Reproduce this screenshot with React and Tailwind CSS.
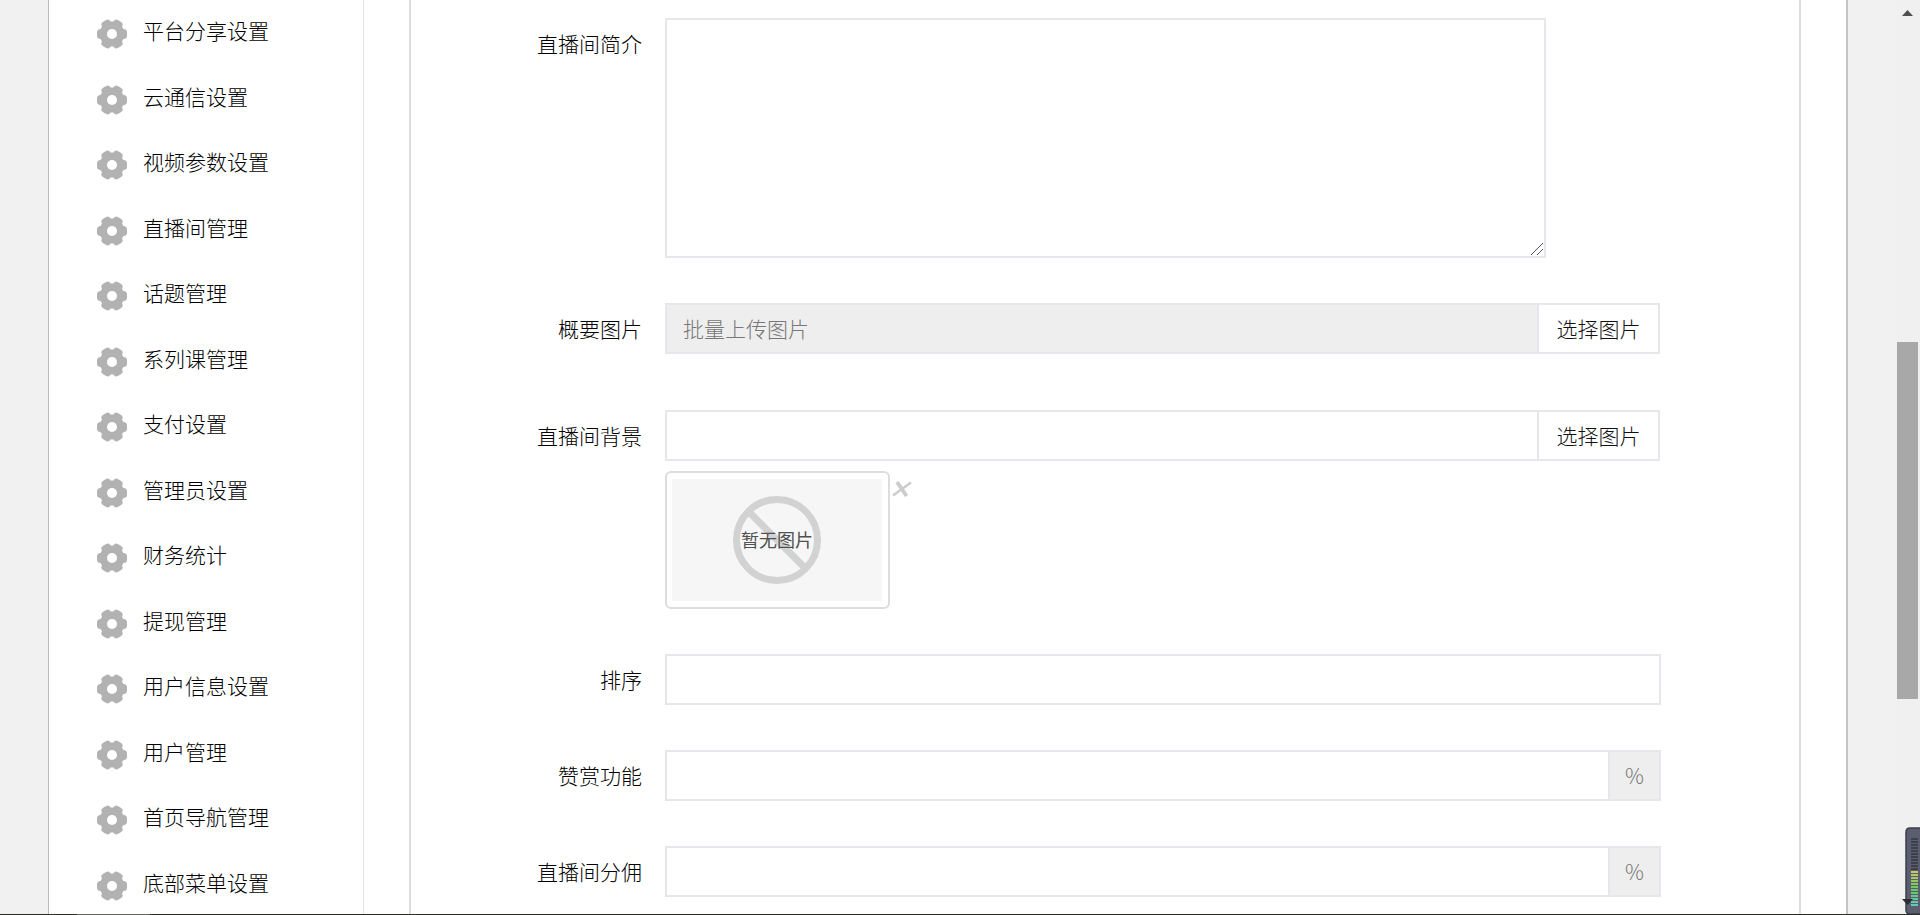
import React from "react";

const MENU_ITEMS = [
  "平台分享设置",
  "云通信设置",
  "视频参数设置",
  "直播间管理",
  "话题管理",
  "系列课管理",
  "支付设置",
  "管理员设置",
  "财务统计",
  "提现管理",
  "用户信息设置",
  "用户管理",
  "首页导航管理",
  "底部菜单设置",
];

function GearIcon() {
  return (
    <svg
      className="w-[30px] h-[30px] shrink-0"
      viewBox="-15 -15 30 30"
      aria-hidden="true"
    >
      <g fill="#b2b2b2">
        <circle r="12.4" />
        {[0, 60, 120].map((angle) => (
          <rect
            key={angle}
            x="-15"
            y="-5"
            width="30"
            height="10"
            rx="3.5"
            transform={`rotate(${angle})`}
          />
        ))}
      </g>
      <circle r="5" fill="#fff" />
    </svg>
  );
}

function Sidebar() {
  return (
    <nav className="w-[315px] shrink-0 border-r border-[#e4e4e4]">
      <ul>
        {MENU_ITEMS.map((item) => (
          <li key={item} className="odd:h-[66px] even:h-[65px]">
            <a
              href="#"
              className="flex items-center gap-4 h-[61px] pl-12 text-[21px] text-black"
            >
              <span className="pt-[7px]">
                <GearIcon />
              </span>
              <span>{item}</span>
            </a>
          </li>
        ))}
      </ul>
    </nav>
  );
}

function FormRow({ id, label, children }) {
  return (
    <div className="flex">
      <label
        htmlFor={id}
        className="w-[231px] mr-[23px] shrink-0 text-right text-[21px] leading-[51px] text-black"
      >
        {label}
      </label>
      <div className="flex-1 min-w-0">{children}</div>
    </div>
  );
}

function ImageField({ id, ...inputProps }) {
  return (
    <div className="flex h-[51px] mr-px">
      <input
        id={id}
        type="text"
        className="flex-1 min-w-0 border-2 border-r-0 border-[#e7e7eb] px-4 text-[21px] outline-none placeholder:text-[#777] read-only:bg-[#eee]"
        {...inputProps}
      />
      <button
        type="button"
        className="w-[123px] shrink-0 border-2 border-[#e7e7eb] bg-white text-[21px] text-[#111]"
      >
        选择图片
      </button>
    </div>
  );
}

function PercentField({ id }) {
  return (
    <div className="flex h-[51px]">
      <input
        id={id}
        type="text"
        className="flex-1 min-w-0 border-2 border-r-0 border-[#e7e7eb] px-4 text-[21px] outline-none"
      />
      <span className="w-[53px] shrink-0 border-2 border-[#e7e7eb] bg-[#eee] text-center text-[21px] leading-[47px] text-[#777]">
        %
      </span>
    </div>
  );
}

function EmptyThumbnail() {
  return (
    <div className="flex items-start mt-[10px]">
      <div className="w-[225px] h-[138px] rounded-[6px] border-2 border-[#ddd] p-[6px] pl-[5px]">
        <div className="relative flex items-center justify-center h-full bg-[#f6f6f6]">
          <svg
            className="w-[88px] h-[88px]"
            viewBox="0 0 88 88"
            fill="none"
            stroke="#d2d2d2"
            strokeWidth="7"
            aria-hidden="true"
          >
            <circle cx="44" cy="44" r="40.5" />
            <path d="M15.5 15.5l57 57" />
          </svg>
          <span className="absolute inset-0 flex items-center justify-center pb-[2px] text-[18px] font-normal text-[#505050]">
            暂无图片
          </span>
        </div>
      </div>
      <button type="button" aria-label="删除" className="ml-[2px] mt-[9px]">
        <svg
          className="w-5 h-[18px]"
          viewBox="0 0 20 18"
          fill="none"
          stroke="#ccc"
          aria-hidden="true"
        >
          <path d="M5 2L14.5 16" strokeWidth="4" />
          <path d="M19 2.5L1 15.5" strokeWidth="2.5" />
        </svg>
      </button>
    </div>
  );
}

function RoomForm() {
  return (
    <form className="flex-1 min-w-0 mx-[45px] border-x-2 border-[#ddd] pt-[18px] pr-[138px] flex flex-col gap-[45px]">
      <FormRow id="intro" label="直播间简介">
        <div className="relative mr-[115px]">
          <textarea
            id="intro"
            className="block w-full h-[240px] resize-none border-2 border-[#e7e7eb] px-4 py-2 text-[21px] outline-none"
          />
          <svg
            className="absolute right-[3px] bottom-[3px] w-3 h-3"
            viewBox="0 0 12 12"
            stroke="#555"
            aria-hidden="true"
          >
            <path d="M0 12L12 0M6 12L12 6" />
          </svg>
        </div>
      </FormRow>

      <div className="flex flex-col gap-14">
        <FormRow id="summary" label="概要图片">
          <ImageField id="summary" placeholder="批量上传图片" readOnly />
        </FormRow>
        <FormRow id="background" label="直播间背景">
          <ImageField id="background" />
          <EmptyThumbnail />
        </FormRow>
      </div>

      <FormRow id="sort" label="排序">
        <input
          id="sort"
          type="text"
          className="block w-full h-[51px] border-2 border-[#e7e7eb] px-4 text-[21px] outline-none"
        />
      </FormRow>
      <FormRow id="reward" label="赞赏功能">
        <PercentField id="reward" />
      </FormRow>
      <FormRow id="commission" label="直播间分佣">
        <PercentField id="commission" />
      </FormRow>
    </form>
  );
}

function ScrollTrack() {
  return (
    <div className="w-6 shrink-0 pr-[2px] bg-[#f0f0f0] flex flex-col items-center">
      <svg className="w-[11px] h-[6px] mt-[10px]" viewBox="0 0 11 6" aria-hidden="true">
        <path d="M5.5 0L11 6H0z" fill="#505050" />
      </svg>
      <div className="w-[21px] h-[39%] mt-[326px] bg-[#a8a8a8]" />
    </div>
  );
}

// floating volume meter docked to the bottom right corner
function LevelMeter() {
  return (
    <svg
      className="absolute right-0 bottom-0 w-[18px] h-[88px]"
      viewBox="0 0 18 88"
      aria-hidden="true"
    >
      <path
        d="M19 1H8Q4 1 4 5V83Q4 87 8 87H19z"
        fill="#5a5e6f"
        stroke="#3c3f4a"
        strokeWidth="1.5"
      />
      {Array.from({ length: 11 }, (_, i) => (
        <rect key={i} x="9" y={11 + i * 3} width="7" height="2" fill="#3d404c" />
      ))}
      {Array.from({ length: 12 }, (_, i) => (
        <rect
          key={i}
          x="9"
          y={44 + i * 3}
          width="7"
          height="2"
          fill={`hsl(${60 + i * 10} 48% 59%)`}
        />
      ))}
      <path d="M0 72H11L5.5 78z" fill="#2b2d33" />
    </svg>
  );
}

export default function App() {
  return (
    <div className="relative h-screen overflow-hidden flex bg-[#f1f1f1] font-['Noto_Sans_CJK_SC','Noto_Sans',sans-serif] font-light">
      <div className="flex-1 min-w-0 flex mx-12 bg-white border-l border-r-2 border-l-[#bbb] border-r-[#c4c4c4]">
        <Sidebar />
        <RoomForm />
      </div>
      <ScrollTrack />
      <LevelMeter />
      <div className="absolute inset-x-0 bottom-0 h-px bg-[#2c2d27]">
        <div className="ml-[77px] w-[73px] h-px bg-[#66685f]" />
      </div>
    </div>
  );
}
